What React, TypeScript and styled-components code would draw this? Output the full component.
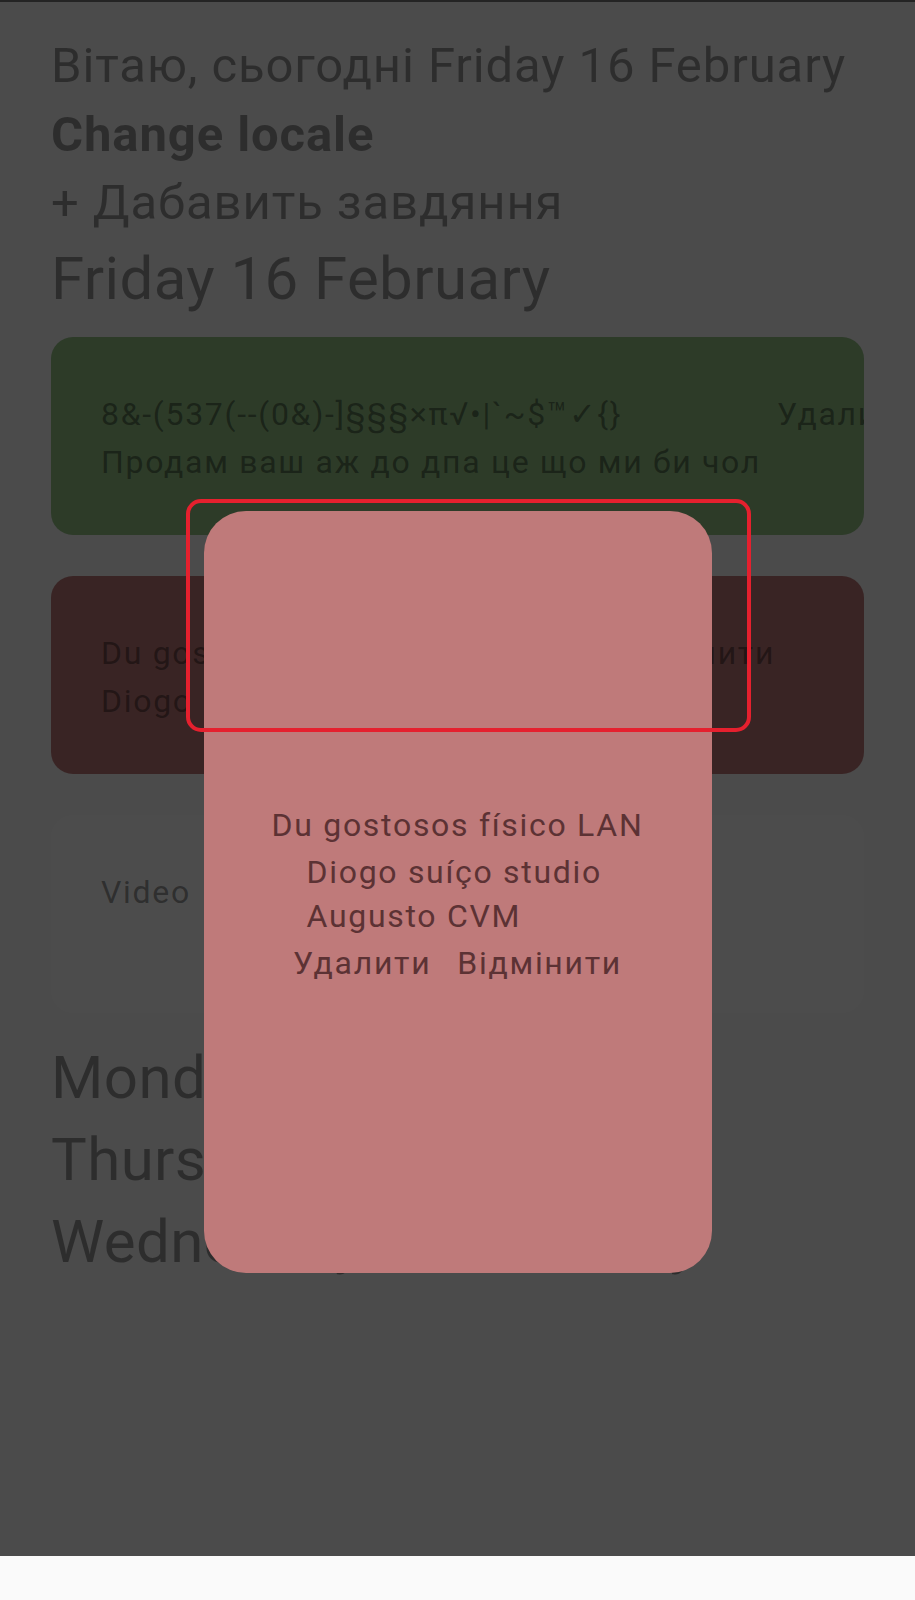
import React from "react";
import styled, { createGlobalStyle } from "styled-components";

type Task = {
  id: number;
  title: string;
  note: string;
  tone: "green" | "pink" | "plain";
};

const tasks: Task[] = [
  {
    id: 1,
    title: "8&-(537(--(0&)-]§§§×π√•|`~$™✓{}",
    note: "Продам ваш аж до дпа це що ми би чол",
    tone: "green",
  },
  {
    id: 2,
    title: "Du gostosos físico LAN",
    note: "Diogo suíço studio Augusto CVM",
    tone: "pink",
  },
  { id: 3, title: "Video", note: "", tone: "plain" },
];

const otherDays = ["Monday 19 February", "Thursday 22 February", "Wednesday 21 February"];

const toneColors = {
  green: "#96c588",
  pink: "#bf7a7a",
  plain: "#ffffff",
};

function App() {
  const selected = tasks[1];

  return (
    <>
      <GlobalStyle />
      <Screen>
        <Content>
          <Greeting>Вітаю, сьогодні Friday 16 February</Greeting>
          <LocaleLink>Change locale</LocaleLink>
          <Greeting>+ Дабавить завдяння</Greeting>
          <DayHeading>Friday 16 February</DayHeading>

          <TaskList>
            {tasks.map((task) => (
              <TaskCard key={task.id} $tone={task.tone}>
                <TaskText>
                  <div>{task.title}</div>
                  <div>{task.note || "\u00a0"}</div>
                </TaskText>
                {task.tone !== "plain" && <DeleteButton>Удалити</DeleteButton>}
              </TaskCard>
            ))}
          </TaskList>

          <LaterDays>
            {otherDays.map((day) => (
              <DayHeading key={day}>{day}</DayHeading>
            ))}
          </LaterDays>
        </Content>

        <Backdrop>
          <Dialog>
            <DialogTitle>{selected.title}</DialogTitle>
            <DialogNote>{selected.note}</DialogNote>
            <DialogActions>
              <DialogButton>Удалити</DialogButton>
              <DialogButton>Відмінити</DialogButton>
            </DialogActions>
          </Dialog>
          <Highlight />
        </Backdrop>
      </Screen>
    </>
  );
}

const GlobalStyle = createGlobalStyle`
  * {
    box-sizing: border-box;
  }
  body {
    margin: 0;
    background: #fafafa;
    font-family: Roboto, "Noto Sans", sans-serif;
  }
`;

const Screen = styled.div`
  position: relative;
  height: 1556px;
  border-top: 2px solid #242424;
  background: #fafafa;
  overflow: hidden;
`;

const Content = styled.div`
  display: flex;
  flex-direction: column;
  padding: 30px 51px 0;
  color: rgba(0, 0, 0, 0.4);
`;

const Greeting = styled.div`
  font-size: 49px;
  line-height: 68.7px;
  letter-spacing: 0.9px;
  white-space: nowrap;
`;

const LocaleLink = styled(Greeting)`
  font-weight: 700;
`;

const DayHeading = styled.div`
  font-size: 60px;
  line-height: 82px;
  letter-spacing: 0.4px;
  white-space: nowrap;
`;

const TaskList = styled.div`
  display: flex;
  flex-direction: column;
  gap: 41px;
  margin-top: 17px;
`;

const TaskCard = styled.div<{ $tone: Task["tone"] }>`
  display: flex;
  align-items: flex-start;
  padding: 53px 50px 49px;
  border-radius: 22px;
  background: ${({ $tone }) => toneColors[$tone]};
  overflow: hidden;
`;

const TaskText = styled.div`
  flex-shrink: 0;
  font-size: 32px;
  line-height: 48px;
  letter-spacing: 1.7px;
  white-space: nowrap;
`;

const DeleteButton = styled.div`
  flex-shrink: 0;
  margin-left: 16px;
  font-size: 32px;
  line-height: 48px;
  letter-spacing: 1.7px;
  white-space: nowrap;
`;

const LaterDays = styled.div`
  display: flex;
  flex-direction: column;
  margin-top: 24px;
`;

const Backdrop = styled.div`
  position: absolute;
  inset: 0;
  display: flex;
  justify-content: center;
  align-items: flex-start;
  padding-top: 509px;
  background: rgba(0, 0, 0, 0.7);
`;

const Dialog = styled.div`
  width: 508px;
  height: 762px;
  display: flex;
  flex-direction: column;
  align-items: center;
  justify-content: center;
  gap: 6px;
  padding-top: 5px;
  border-radius: 42px;
  background: #bf7a7a;
  color: #5c3234;
  font-size: 32px;
  letter-spacing: 1.7px;
`;

const DialogTitle = styled.div`
  line-height: 37.5px;
  white-space: nowrap;
`;

const DialogNote = styled.div`
  width: 100%;
  max-width: 302px;
  line-height: 44px;
`;

const DialogActions = styled.div`
  display: flex;
  gap: 26px;
  margin-top: 1px;
`;

const DialogButton = styled.div`
  line-height: 37.5px;
  white-space: nowrap;
`;

const Highlight = styled.div`
  position: absolute;
  left: 186px;
  top: 497px;
  width: 565px;
  height: 233px;
  border: 4px solid #e5202e;
  border-radius: 15px;
`;

export default App;
